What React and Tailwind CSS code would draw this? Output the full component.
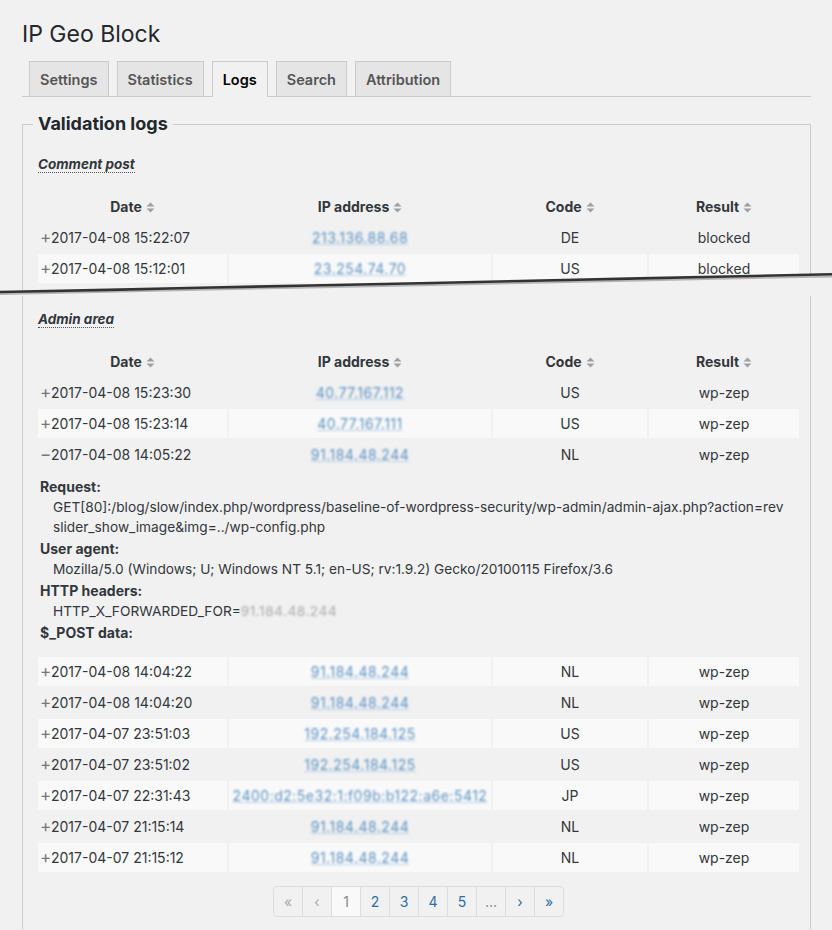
const commentRows = [
  { d: '2017-04-08 15:22:07', ip: '213.136.88.68', c: 'DE', r: 'blocked' },
  { d: '2017-04-08 15:12:01', ip: '23.254.74.70', c: 'US', r: 'blocked', s: true },
]

const adminRows = [
  { d: '2017-04-08 15:23:30', ip: '40.77.167.112', c: 'US', r: 'wp-zep' },
  { d: '2017-04-08 15:23:14', ip: '40.77.167.111', c: 'US', r: 'wp-zep', s: true },
  { d: '2017-04-08 14:05:22', ip: '91.184.48.244', c: 'NL', r: 'wp-zep', open: true },
  { d: '2017-04-08 14:04:22', ip: '91.184.48.244', c: 'NL', r: 'wp-zep', s: true },
  { d: '2017-04-08 14:04:20', ip: '91.184.48.244', c: 'NL', r: 'wp-zep' },
  { d: '2017-04-07 23:51:03', ip: '192.254.184.125', c: 'US', r: 'wp-zep', s: true },
  { d: '2017-04-07 23:51:02', ip: '192.254.184.125', c: 'US', r: 'wp-zep' },
  { d: '2017-04-07 22:31:43', ip: '2400:d2:5e32:1:f09b:b122:a6e:5412', c: 'JP', r: 'wp-zep', s: true },
  { d: '2017-04-07 21:15:14', ip: '91.184.48.244', c: 'NL', r: 'wp-zep' },
  { d: '2017-04-07 21:15:12', ip: '91.184.48.244', c: 'NL', r: 'wp-zep', s: true },
]

function SortIcon() {
  return (
    <svg width="9" height="11" viewBox="0 0 9 11" className="inline-block ml-[4px] align-[-1px]">
      <path d="M0.5 4.5 L4.5 0.5 L8.5 4.5 Z" fill="#a0a0a0" />
      <path d="M0.5 6.5 L8.5 6.5 L4.5 10.5 Z" fill="#a0a0a0" />
    </svg>
  )
}

function Blurred({ children, gray }) {
  return (
    <span className={
      gray
        ? 'inline-block blur-[1.3px] text-[#aaa] tracking-[0.5px]'
        : 'inline-block blur-[1.3px] text-[#5d93c4] underline decoration-[#b7d0e6] tracking-[0.5px]'
    }>
      {children}
    </span>
  )
}

function Row({ row }) {
  const bg = row.s ? 'bg-[#f9f9f9]' : ''
  return (
    <tr className="h-[29px]">
      <td className={`${bg} pl-[2px] whitespace-nowrap`}>
        <span className="text-[#777] text-[17px] leading-[14px] inline-block w-[11px]">{row.open ? '−' : '+'}</span>
        {row.d}
      </td>
      <td className={`${bg} text-center`}><Blurred>{row.ip}</Blurred></td>
      <td className={`${bg} text-center`}>{row.c}</td>
      <td className={`${bg} text-center`}>{row.r}</td>
    </tr>
  )
}

function Detail() {
  return (
    <tr>
      <td colSpan={4} className="pt-[6px] pb-[12px] pl-[2px] leading-[20px]">
        <div className="font-bold">Request:</div>
        <div className="pl-[13px] mb-[2px] whitespace-nowrap text-[13.7px]">
          GET[80]:/blog/slow/index.php/wordpress/baseline-of-wordpress-security/wp-admin/admin-ajax.php?action=rev
          <br />
          slider_show_image&amp;img=../wp-config.php
        </div>
        <div className="font-bold">User agent:</div>
        <div className="pl-[13px] mb-[2px] text-[13.7px]">
          Mozilla/5.0 (Windows; U; Windows NT 5.1; en-US; rv:1.9.2) Gecko/20100115 Firefox/3.6
        </div>
        <div className="font-bold">HTTP headers:</div>
        <div className="pl-[13px] mb-[2px] text-[13.7px]">
          HTTP_X_FORWARDED_FOR=<Blurred gray>91.184.48.244</Blurred>
        </div>
        <div className="font-bold">$_POST data:</div>
      </td>
    </tr>
  )
}

function LogTable({ rows }) {
  return (
    <table className="border-separate border-spacing-[2px] -mx-[2px] w-[765px] table-fixed mt-[15px] text-[14px] text-[#32373c]">
      <colgroup>
        <col className="w-[189px]" />
        <col className="w-[262px]" />
        <col className="w-[154px]" />
        <col className="w-[150px]" />
      </colgroup>
      <thead>
        <tr className="h-[30px] font-bold">
          <th className="text-center">Date<SortIcon /></th>
          <th className="text-center">IP address<SortIcon /></th>
          <th className="text-center">Code<SortIcon /></th>
          <th className="text-center">Result<SortIcon /></th>
        </tr>
      </thead>
      <tbody>
        {rows.map((row, i) => (
          <>
            <Row key={i} row={row} />
            {row.open && <Detail key={'d' + i} />}
          </>
        ))}
      </tbody>
    </table>
  )
}

function SectionTitle({ children }) {
  return (
    <p className="text-[13.5px] leading-[20px] font-bold italic text-[#32373c]">
      <span className="border-b border-dotted border-[#555]">{children}</span>
    </p>
  )
}

const tabs = ['Settings', 'Statistics', 'Logs', 'Search', 'Attribution']

function Pager() {
  const items = [
    { t: '«', c: 'text-[#aaa]' },
    { t: '‹', c: 'text-[#aaa]' },
    { t: '1', c: 'text-[#8a8a8a] bg-[#f9f9f9]' },
    { t: '2', c: 'text-[#2e6da4]' },
    { t: '3', c: 'text-[#2e6da4]' },
    { t: '4', c: 'text-[#2e6da4]' },
    { t: '5', c: 'text-[#2e6da4]' },
    { t: '…', c: 'text-[#777]' },
    { t: '›', c: 'text-[#2e6da4]' },
    { t: '»', c: 'text-[#2e6da4]' },
  ]
  return (
    <div className="flex justify-center mt-[12px]">
      {items.map((it, i) => (
        <div
          key={i}
          className={`w-[30px] h-[31px] flex items-center justify-center border border-[#ddd] text-[14px] ${i > 0 ? '-ml-px' : 'rounded-l-[4px]'} ${i === items.length - 1 ? 'rounded-r-[4px]' : ''} ${it.c}`}
        >
          {it.t}
        </div>
      ))}
    </div>
  )
}

export default function App() {
  return (
    <div className="bg-[#f1f1f1] min-h-[930px] font-[Inter,sans-serif] text-[#32373c]">
      <div className="relative h-[296px] overflow-hidden">
        <div className="pl-[22px] pr-[21px] pt-[20px]">
          <h1 className="text-[23px] leading-[29px] text-[#23282d]">IP Geo Block</h1>
          <div className="mt-[12px] flex items-end gap-[8px] pl-[7px] border-b border-[#ccc] h-[36px]">
            {tabs.map(t => (
              <div
                key={t}
                className={
                  t === 'Logs'
                    ? 'h-[36px] -mb-px px-[10px] border border-b-0 border-[#ccc] bg-[#f1f1f1] text-black font-semibold text-[14.5px] leading-[36px]'
                    : 'h-[35px] px-[10px] border border-b-0 border-[#ccc] bg-[#e5e5e5] text-[#555] font-semibold text-[14.5px] leading-[36px]'
                }
              >
                {t}
              </div>
            ))}
          </div>
          <fieldset className="mt-[16px] border border-[#ccc] pl-[15px] pr-[11px] h-[400px]">
            <legend className="-ml-[5px] px-[5px] text-[18px] leading-[22px] font-bold text-[#23282d]">Validation logs</legend>
            <div className="mt-[19px]">
              <SectionTitle>Comment post</SectionTitle>
            </div>
            <LogTable rows={commentRows} />
          </fieldset>
        </div>
        <svg className="absolute inset-0 pointer-events-none" width="832" height="296" viewBox="0 0 832 296">
          <polygon points="0,292 832,274 832,296 0,296" fill="#f1f1f1" />
          <polyline
            points="0,294 120,291.5 200,289.7 310,287.5 420,285.3 520,283.1 640,280.5 740,278.3 832,276.5"
            fill="none" stroke="#b5b5b5" strokeWidth="2"
          />
          <polyline
            points="0,292 120,289.6 200,287.8 310,285.5 420,283.2 520,281 640,278.4 740,276.2 832,274.3"
            fill="none" stroke="#333" strokeWidth="2.6"
          />
        </svg>
      </div>
      <div className="ml-[22px] mr-[21px] border-x border-[#ccc] pl-[15px] pr-[11px] pt-[13px] pb-[12px]">
        <SectionTitle>Admin area</SectionTitle>
        <LogTable rows={adminRows} />
        <Pager />
      </div>
    </div>
  )
}
